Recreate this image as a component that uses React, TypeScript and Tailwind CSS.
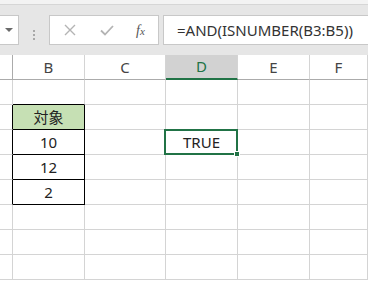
import React from "react";

const cols = ["B", "C", "D", "E", "F"];
const grid = "grid grid-cols-[13px_72px_81px_72px_72px_1fr]";

type Cell = { text?: string; kind?: "head" | "box" | "sel" };

const rows: Cell[][] = [
  [{}, {}, {}, {}, {}],
  [{ text: "対象", kind: "head" }, {}, {}, {}, {}],
  [{ text: "10", kind: "box" }, {}, { text: "TRUE", kind: "sel" }, {}, {}],
  [{ text: "12", kind: "box" }, {}, {}, {}, {}],
  [{ text: "2", kind: "box" }, {}, {}, {}, {}],
  [{}, {}, {}, {}, {}],
  [{}, {}, {}, {}, {}],
  [{}, {}, {}, {}, {}],
];

function FormulaBar() {
  return (
    <div className="flex h-[50px] items-start bg-[#e6e6e6] pt-[10px]">
      <div className="flex h-[30px] w-[19px] items-center justify-center border border-l-0 border-[#c8c8c8] bg-white">
        <div className="h-0 w-0 border-x-[4px] border-t-[4px] border-x-transparent border-t-[#6a6a6a]" />
      </div>
      <div className="flex w-[30px] flex-col items-center justify-center gap-[2px] self-center">
        <span className="h-[2px] w-[2px] bg-[#a8a8a8]" />
        <span className="h-[2px] w-[2px] bg-[#a8a8a8]" />
        <span className="h-[2px] w-[2px] bg-[#a8a8a8]" />
      </div>
      <div className="flex h-[30px] w-[110px] items-center border border-[#c8c8c8] bg-white">
        <svg width="12" height="12" viewBox="0 0 12 12" className="ml-[14px]">
          <path d="M1 1 L11 11 M11 1 L1 11" stroke="#b4b4b4" strokeWidth="1.4" fill="none" />
        </svg>
        <svg width="14" height="11" viewBox="0 0 14 11" className="ml-[24px]">
          <path d="M1 5.5 L5 9.5 L13 1" stroke="#b4b4b4" strokeWidth="1.8" fill="none" />
        </svg>
        <span className="ml-[22px] font-['Liberation_Serif',serif] text-[14px] italic text-[#555]">
          f<span className="text-[11px]">x</span>
        </span>
      </div>
      <div className="ml-[4px] flex h-[30px] flex-1 items-center border border-r-0 border-[#c8c8c8] bg-white pl-[13px] text-[15px] text-[#333]">
        =AND(ISNUMBER(B3:B5))
      </div>
    </div>
  );
}

function Header() {
  return (
    <div className={`${grid} h-[25px] bg-white text-[15px] text-[#444]`}>
      <div className="border-r border-b border-[#ababab]" />
      {cols.map((c) =>
        c === "D" ? (
          <div
            key={c}
            className="flex items-center justify-center border-r border-b-2 border-r-[#d4d4d4] border-b-[#217346] bg-[#d2d2d2] text-[#217346]"
          >
            {c}
          </div>
        ) : (
          <div key={c} className="flex items-center justify-center border-r border-b border-r-[#d4d4d4] border-b-[#ababab]">
            {c}
          </div>
        )
      )}
    </div>
  );
}

export default function App() {
  return (
    <div className="h-[285px] w-[368px] overflow-hidden bg-white font-['Noto_Sans','Noto_Sans_CJK_JP',sans-serif]">
      <div className="h-[5px] border-b border-[#d6d6d6] bg-[#f3f3f3]" />
      <FormulaBar />
      <Header />
      {rows.map((r, i) => {
        const inBox = i >= 1 && i <= 4;
        return (
          <div key={i} className={`${grid} h-[25px] text-[15px] text-[#222]`}>
            <div className={`border-b border-r border-b-[#d4d4d4] ${inBox ? "border-r-black" : "border-r-[#d4d4d4]"}`} />
            {r.map((c, j) => {
              const topOfBox = i === 0 && j === 0;
              if (c.kind === "head" || c.kind === "box") {
                return (
                  <div
                    key={j}
                    className={`flex items-center justify-center border-b border-r border-black ${c.kind === "head" ? "bg-[#c6e0b4]" : ""}`}
                  >
                    {c.text}
                  </div>
                );
              }
              if (c.kind === "sel") {
                return (
                  <div key={j} className="relative flex items-center justify-center border-b border-r border-[#d4d4d4]">
                    {c.text}
                    <div className="absolute -top-[1px] -left-[2px] -right-[1px] -bottom-[1px] border-2 border-[#217346]" />
                    <div className="absolute -right-[3px] -bottom-[3px] h-[6px] w-[6px] border border-white bg-[#217346]" />
                  </div>
                );
              }
              return (
                <div
                  key={j}
                  className={`border-r border-b border-r-[#d4d4d4] ${topOfBox ? "border-b-black" : "border-b-[#d4d4d4]"}`}
                />
              );
            })}
          </div>
        );
      })}
    </div>
  );
}
